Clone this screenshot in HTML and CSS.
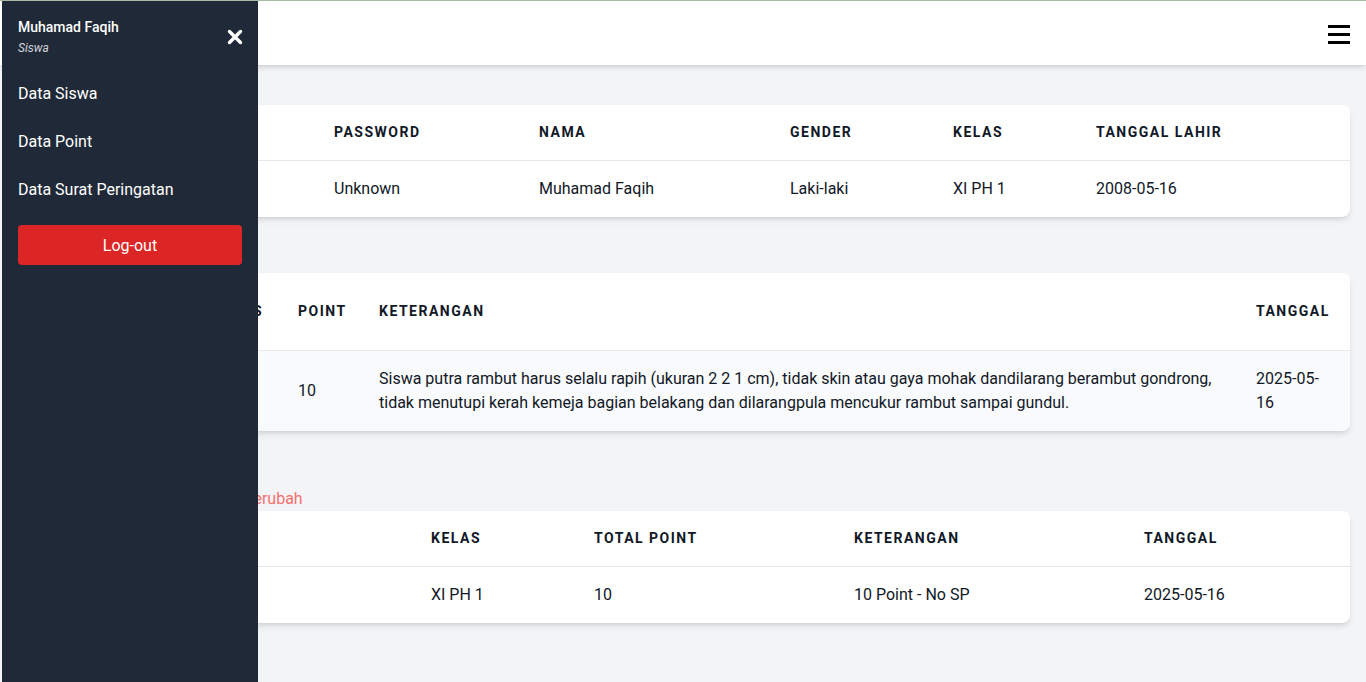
FILE: index.html
```html
<!DOCTYPE html>
<html lang="id">
<head>
<meta charset="utf-8">
<title>Dashboard Siswa</title>
<link rel="stylesheet" href="styles.css">
</head>
<body>
<header class="topbar">
  <button class="burger" aria-label="Menu">
    <svg width="22" height="20" viewBox="0 0 22 20"><rect x="0" y="1" width="22" height="3"/><rect x="0" y="9" width="22" height="3"/><rect x="0" y="17" width="22" height="3"/></svg>
  </button>
</header>

<main class="content">
  <section class="sec">
    <h2 class="sec-title first">Data Siswa</h2>
    <div class="card">
      <table class="tbl">
        <colgroup><col style="width:84px"><col style="width:218px"><col style="width:205px"><col style="width:251px"><col style="width:163px"><col style="width:143px"><col style="width:270px"></colgroup>
        <thead><tr><th>No</th><th>NIS</th><th>Password</th><th>Nama</th><th>Gender</th><th>Kelas</th><th>Tanggal Lahir</th></tr></thead>
        <tbody><tr><td>1</td><td>00123</td><td>Unknown</td><td>Muhamad Faqih</td><td>Laki-laki</td><td>XI PH 1</td><td>2008-05-16</td></tr></tbody>
      </table>
    </div>
  </section>

  <section class="sec">
    <h2 class="sec-title">Data Point</h2>
    <div class="card">
      <table class="tbl">
        <colgroup><col style="width:181px"><col style="width:85px"><col style="width:81px"><col style="width:877px"><col style="width:110px"></colgroup>
        <thead><tr><th class="two">Jenis<br>Pelanggaran</th><th>Kelas</th><th>Point</th><th>Keterangan</th><th>Tanggal</th></tr></thead>
        <tbody><tr class="alt"><td>Rambut</td><td>XI</td><td>10</td><td>Siswa putra rambut harus selalu rapih (ukuran 2 2 1 cm), tidak skin atau gaya mohak dandilarang berambut gondrong, tidak menutupi kerah kemeja bagian belakang dan dilarangpula mencukur rambut sampai gundul.</td><td>2025-05-<wbr>16</td></tr></tbody>
      </table>
    </div>
  </section>

  <section class="sec">
    <h2 class="sec-title">Surat Peringatan</h2>
    <p class="note">Catatan: surat peringatan dapat berubah</p>
    <div class="card">
      <table class="tbl">
        <colgroup><col style="width:84px"><col style="width:315px"><col style="width:163px"><col style="width:260px"><col style="width:290px"><col style="width:222px"></colgroup>
        <thead><tr><th>No</th><th>Nama</th><th>Kelas</th><th>Total Point</th><th>Keterangan</th><th>Tanggal</th></tr></thead>
        <tbody><tr><td>1</td><td>Faqih</td><td>XI PH 1</td><td>10</td><td>10 Point - No SP</td><td>2025-05-16</td></tr></tbody>
      </table>
    </div>
  </section>
</main>

<aside class="sidebar">
  <div class="side-head">
    <div class="user">
      <div class="user-name">Muhamad Faqih</div>
      <div class="user-role">Siswa</div>
    </div>
    <button class="close" aria-label="Tutup">
      <svg width="16" height="16" viewBox="0 0 16 16"><path d="M2.5 2.5 L13.5 13.5 M13.5 2.5 L2.5 13.5" stroke="#fff" stroke-width="3.4" stroke-linecap="round" fill="none"/></svg>
    </button>
  </div>
  <nav class="menu">
    <a class="menu-item" href="#">Data Siswa</a>
    <a class="menu-item" href="#">Data Point</a>
    <a class="menu-item" href="#">Data Surat Peringatan</a>
  </nav>
  <button class="logout">Log-out</button>
</aside>
</body>
</html>
```
FILE: styles.css
```css
* { box-sizing: border-box; }
html, body { margin: 0; padding: 0; }
body {
  font-family: Roboto, "Liberation Sans", Arial, sans-serif;
  font-size: 16px;
  color: #111827;
  background: #f3f4f6;
  border-top: 1px solid #a8bba3;
  min-height: 100vh;
}
.topbar {
  height: 64px;
  background: #fff;
  display: flex;
  justify-content: flex-end;
  align-items: center;
  padding: 0 16px;
  box-shadow: 0 4px 6px -1px rgba(0,0,0,.1), 0 2px 4px -2px rgba(0,0,0,.1);
  position: relative;
  z-index: 1;
}
.burger {
  border: 0; background: none; padding: 0; margin-top: 1px;
  display: flex; fill: #000; cursor: pointer;
}
.content { padding: 0 16px; }
.sec-title {
  margin: 0; height: 56px; display: flex; align-items: center;
  font-size: 20px; font-weight: 700;
}
.sec-title.first { height: 40px; }
.note {
  margin: 0; height: 24px; line-height: 24px;
  color: #f87171; font-size: 16px;
}
.card {
  background: #fff;
  border-radius: 8px;
  overflow: hidden;
  box-shadow: 0 4px 6px -1px rgba(0,0,0,.1), 0 2px 4px -2px rgba(0,0,0,.1);
}
.tbl { width: 100%; border-collapse: collapse; table-layout: fixed; }
.tbl th {
  text-align: left;
  font-size: 14px;
  line-height: 23px;
  font-weight: 700;
  text-transform: uppercase;
  letter-spacing: 1.5px;
  color: #111827;
  padding: 16px 16px;
  border-bottom: 1px solid #e5e7eb;
  vertical-align: middle;
}
.tbl th.two { line-height: 22.5px; }
.tbl td {
  padding: 16px 16px;
  line-height: 24px;
  vertical-align: middle;
  color: #111827;
}
.tbl tr.alt td { background: #f9fafb; }

.sidebar {
  position: fixed;
  top: 1px; left: 2px; bottom: 0;
  width: 256px;
  background: #1f2937;
  color: #fff;
  padding: 16px;
  z-index: 10;
}
.side-head { display: flex; justify-content: space-between; align-items: center; }
.user-name { font-size: 14px; line-height: 20px; font-weight: 500; }
.user-role { font-size: 12px; line-height: 18px; font-style: italic; color: #d1d5db; margin-top: 2px; }
.close { border: 0; background: none; padding: 0; display: flex; margin-top: 0; margin-right: -1px; cursor: pointer; }
.menu { display: flex; flex-direction: column; margin-top: 13px; }
.menu-item {
  color: #fff; text-decoration: none;
  font-size: 16px; line-height: 24px;
  padding: 12px 0;
}
.logout {
  margin-top: 11px;
  width: 100%; height: 40px;
  border: 0; border-radius: 4px;
  background: #dc2626; color: #fff;
  font-family: inherit; font-size: 16px;
  cursor: pointer;
}
```
